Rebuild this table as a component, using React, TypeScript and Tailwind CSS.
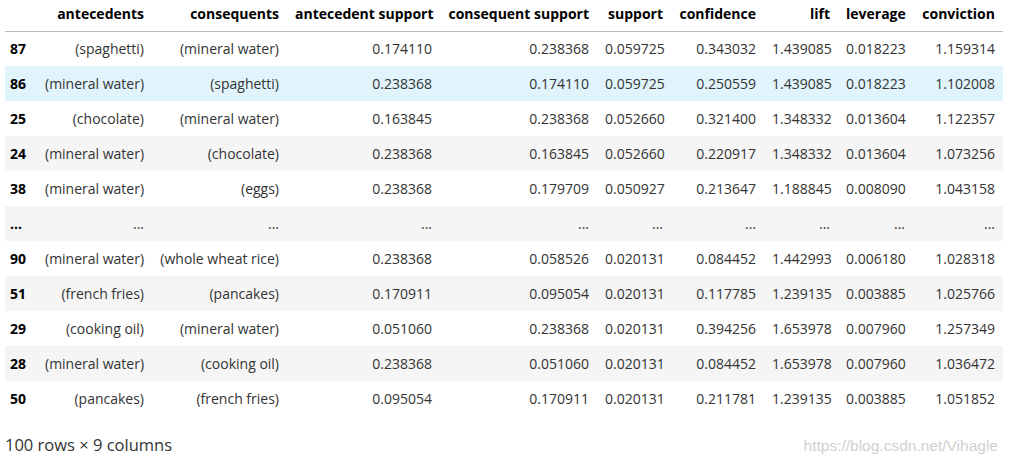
import React from 'react';

const columns = [
  'antecedents',
  'consequents',
  'antecedent support',
  'consequent support',
  'support',
  'confidence',
  'lift',
  'leverage',
  'conviction',
];

// largura de cada coluna (índice primeiro)
const widths = [32, 115, 135, 153, 157, 74, 93, 74, 75, 90];

const rows: string[][] = [
  ['87', '(spaghetti)', '(mineral water)', '0.174110', '0.238368', '0.059725', '0.343032', '1.439085', '0.018223', '1.159314'],
  ['86', '(mineral water)', '(spaghetti)', '0.238368', '0.174110', '0.059725', '0.250559', '1.439085', '0.018223', '1.102008'],
  ['25', '(chocolate)', '(mineral water)', '0.163845', '0.238368', '0.052660', '0.321400', '1.348332', '0.013604', '1.122357'],
  ['24', '(mineral water)', '(chocolate)', '0.238368', '0.163845', '0.052660', '0.220917', '1.348332', '0.013604', '1.073256'],
  ['38', '(mineral water)', '(eggs)', '0.238368', '0.179709', '0.050927', '0.213647', '1.188845', '0.008090', '1.043158'],
  ['...', '...', '...', '...', '...', '...', '...', '...', '...', '...'],
  ['90', '(mineral water)', '(whole wheat rice)', '0.238368', '0.058526', '0.020131', '0.084452', '1.442993', '0.006180', '1.028318'],
  ['51', '(french fries)', '(pancakes)', '0.170911', '0.095054', '0.020131', '0.117785', '1.239135', '0.003885', '1.025766'],
  ['29', '(cooking oil)', '(mineral water)', '0.051060', '0.238368', '0.020131', '0.394256', '1.653978', '0.007960', '1.257349'],
  ['28', '(mineral water)', '(cooking oil)', '0.238368', '0.051060', '0.020131', '0.084452', '1.653978', '0.007960', '1.036472'],
  ['50', '(pancakes)', '(french fries)', '0.095054', '0.170911', '0.020131', '0.211781', '1.239135', '0.003885', '1.051852'],
];

export default function App() {
  return (
    <div className="w-[1011px] h-[463px] bg-white text-[#333] font-['Open_Sans',sans-serif] text-[14px] overflow-hidden relative">
      <table className="ml-[5px] border-collapse table-fixed w-[998px]">
        <colgroup>
          {widths.map((w, i) => (
            <col key={i} style={{ width: w }} />
          ))}
        </colgroup>
        <thead>
          <tr className="h-[31px] border-b border-[#bdbdbd]">
            <th></th>
            {columns.map((c) => (
              <th key={c} className="text-right font-bold text-black text-[14px] px-2 align-middle pb-[3px] whitespace-nowrap">
                {c}
              </th>
            ))}
          </tr>
        </thead>
        <tbody>
          {rows.map((r, i) => (
            <tr
              key={i}
              className={
                'h-[35px] ' + (i === 1 ? 'bg-[#e1f4fc]' : i % 2 === 1 ? 'bg-[#f5f5f5]' : 'bg-white')
              }
            >
              {r.map((cell, j) =>
                j === 0 ? (
                  <th key={j} className="text-left font-bold text-black text-[14px] pl-[5px] align-middle">
                    {cell}
                  </th>
                ) : (
                  <td key={j} className="text-right px-2 align-middle whitespace-nowrap">
                    {cell}
                  </td>
                )
              )}
            </tr>
          ))}
        </tbody>
      </table>

      <div className="mt-[17px] flex items-center justify-between pl-[5px] pr-[13px]">
        <p className="text-[16.5px] text-[#333]">100 rows × 9 columns</p>
        <p className="font-['Liberation_Sans',sans-serif] text-[15.5px] text-[#d0d0d0]">https://blog.csdn.net/Vihagle</p>
      </div>
    </div>
  );
}
